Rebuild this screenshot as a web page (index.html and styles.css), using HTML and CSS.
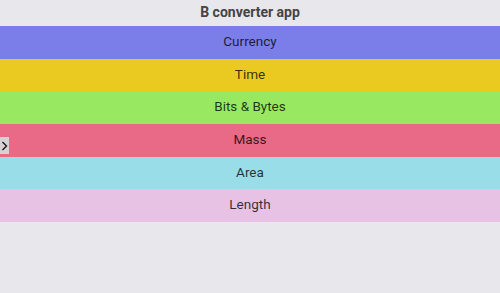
FILE: index.html
```html
<!DOCTYPE html>
<html>
<head>
    <title>B converter app</title>
    <link rel="stylesheet" href="styles.css">
</head>
<body>
    <h1 class="title">B converter app</h1>
    <div class="menu">
        <div class="item currency">Currency</div>
        <div class="item time">Time</div>
        <div class="item bits">Bits &amp; Bytes</div>
        <div class="item mass">Mass</div>
        <div class="item area">Area</div>
        <div class="item length">Length</div>
        <button class="toggle">
            <svg width="7" height="12" viewBox="0 0 7 12"><path d="M1.5 2 L5.5 6 L1.5 10" fill="none" stroke="#111" stroke-width="1.3"/></svg>
        </button>
    </div>
</body>
</html>
```

FILE: styles.css
```css
body {
    margin: 0;
    background: #e8e8ec;
    font-family: Roboto, "Liberation Sans", sans-serif;
}
.title {
    margin: 0;
    height: 26px;
    line-height: 25px;
    font-size: 14px;
    font-weight: bold;
    color: #444;
    text-align: center;
}
.menu {
    position: relative;
}
.item {
    height: 32.7px;
    line-height: 30px;
    text-align: center;
    font-size: 13.5px;
    color: rgba(0, 0, 0, 0.78);
}
.currency { background: #7b7de8; }
.time { background: #eaca20; }
.bits { background: #98e862; }
.mass { background: #e86a86; }
.area { background: #98dde8; }
.length { background: #e8c2e4; }
.toggle {
    position: absolute;
    left: 0;
    top: 111px;
    width: 9px;
    height: 17px;
    padding: 0;
    border: none;
    background: #d8d0d4;
    display: flex;
    align-items: center;
    justify-content: center;
}
```
